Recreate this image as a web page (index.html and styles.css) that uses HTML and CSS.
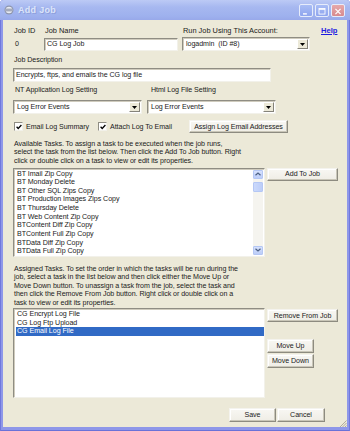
FILE: index.html
```html
<!DOCTYPE html>
<html lang="en">

<head>
    <meta charset="UTF-8">
    <meta name="viewport" content="width=device-width, initial-scale=1.0">
    <title>Add Job</title>
    <link rel="stylesheet" href="styles.css">
</head>

<body>
    <div class="window">
        <div class="titlebar">
            <svg class="app-icon" width="10" height="10" viewBox="0 0 10 10">
                <circle cx="5" cy="5" r="4.5" fill="#8e96ad" />
                <circle cx="5" cy="5" r="3.3" fill="#e8ebf2" />
                <path d="M2 4.2h6M2 5.8h6" stroke="#7d859c" stroke-width="0.9" />
            </svg>
            <span class="title">Add Job</span>
            <div class="controls">
                <span class="ctl">
                    <svg width="14" height="13" viewBox="0 0 14 13"><rect x="3.5" y="8.5" width="4.5" height="1.6" fill="#fff" /></svg>
                </span>
                <span class="ctl">
                    <svg width="14" height="13" viewBox="0 0 14 13"><rect x="3.5" y="3" width="7" height="6.5" fill="none" stroke="#fff" stroke-width="1" /><rect x="3.5" y="3" width="7" height="1.5" fill="#fff" /></svg>
                </span>
                <span class="ctl ctl-close">
                    <svg width="14" height="13" viewBox="0 0 14 13"><path d="M4 3.5l6 6M10 3.5l-6 6" stroke="#fff" stroke-width="1.4" /></svg>
                </span>
            </div>
        </div>

        <div class="client">
            <div class="row row-top">
                <span class="col-id">Job ID</span>
                <span class="col-name">Job Name</span>
                <span class="col-account">Run Job Using This Account:</span>
                <a class="help" href="#">Help</a>
            </div>

            <div class="row row-fields">
                <span class="job-id">0</span>
                <div class="field field-name">CG Log Job</div>
                <div class="combo combo-account">
                    <span class="combo-text">logadmin&nbsp; (ID #8)</span>
                    <span class="drop"><svg width="5" height="3" viewBox="0 0 5 3"><path d="M0 0h5L2.5 3z" fill="#000" /></svg></span>
                </div>
            </div>

            <div class="row label-row label-desc">Job Description</div>
            <div class="row row-desc">
                <div class="field field-desc">Encrypts, ftps, and emails the CG log file</div>
            </div>

            <div class="row label-row label-logs">
                <span class="col-nt">NT Application Log Setting</span>
                <span>Html Log File Setting</span>
            </div>
            <div class="row row-logs">
                <div class="combo combo-nt">
                    <span class="combo-text">Log Error Events</span>
                    <span class="drop"><svg width="5" height="3" viewBox="0 0 5 3"><path d="M0 0h5L2.5 3z" fill="#000" /></svg></span>
                </div>
                <div class="combo combo-html">
                    <span class="combo-text">Log Error Events</span>
                    <span class="drop"><svg width="5" height="3" viewBox="0 0 5 3"><path d="M0 0h5L2.5 3z" fill="#000" /></svg></span>
                </div>
            </div>

            <div class="row row-checks">
                <span class="check"><svg width="6" height="6" viewBox="0 0 6 6"><path d="M0.6 2.8l1.6 1.7L5.4 1" fill="none" stroke="#000" stroke-width="1.3" /></svg></span>
                <span class="check-label check-label-1">Email Log Summary</span>
                <span class="check"><svg width="6" height="6" viewBox="0 0 6 6"><path d="M0.6 2.8l1.6 1.7L5.4 1" fill="none" stroke="#000" stroke-width="1.3" /></svg></span>
                <span class="check-label check-label-2">Attach Log To Email</span>
                <button class="btn btn-assign">Assign Log Email Addresses</button>
            </div>

            <p class="note note-available">Available Tasks. To assign a task to be executed when the job runs,<br>select the task from the list below. Then click the Add To Job button. Right<br>click or double click on a task to view or edit its properties.</p>

            <div class="row row-list">
                <div class="list">
                    <div class="list-items">
                        <div class="item">BT Imail Zip Copy</div>
                        <div class="item">BT Monday Delete</div>
                        <div class="item">BT Other SQL Zips Copy</div>
                        <div class="item">BT Production Images Zips Copy</div>
                        <div class="item">BT Thursday Delete</div>
                        <div class="item">BT Web Content Zip Copy</div>
                        <div class="item">BTContent Diff Zip Copy</div>
                        <div class="item">BTContent Full Zip Copy</div>
                        <div class="item">BTData Diff Zip Copy</div>
                        <div class="item">BTData Full Zip Copy</div>
                    </div>
                    <div class="scrollbar">
                        <span class="sb-btn"><svg width="6" height="4" viewBox="0 0 6 4"><path d="M0.5 3.3L3 1l2.5 2.3" fill="none" stroke="#4d6185" stroke-width="1.2" /></svg></span>
                        <span class="sb-thumb"></span>
                        <span class="sb-track"></span>
                        <span class="sb-btn"><svg width="6" height="4" viewBox="0 0 6 4"><path d="M0.5 0.7L3 3l2.5-2.3" fill="none" stroke="#4d6185" stroke-width="1.2" /></svg></span>
                    </div>
                </div>
                <div class="side">
                    <button class="btn btn-wide">Add To Job</button>
                </div>
            </div>

            <p class="note note-assigned">Assigned Tasks. To set the order in which the tasks will be run during the<br>job, select a task in the list below and then click either the Move Up or<br>Move Down button. To unassign a task from the job, select the task and<br>then click the Remove From Job button. Right click or double click on a<br>task to view or edit its properties.</p>

            <div class="row row-list row-assigned">
                <div class="list list-assigned">
                    <div class="list-items">
                        <div class="item">CG Encrypt Log File</div>
                        <div class="item">CG Log Ftp Upload</div>
                        <div class="item selected">CG Email Log File</div>
                    </div>
                </div>
                <div class="side">
                    <button class="btn btn-wide btn-remove">Remove From Job</button>
                    <button class="btn btn-move btn-up">Move Up</button>
                    <button class="btn btn-move btn-down">Move Down</button>
                </div>
            </div>

            <div class="row row-footer">
                <button class="btn btn-save">Save</button>
                <button class="btn btn-cancel">Cancel</button>
                <svg class="grip" width="9" height="7" viewBox="0 0 9 7">
                    <path d="M8.5 0.5L2 7M8.5 3L4.5 7M8.5 5.5L7 7" stroke="#a8a496" stroke-width="0.9" />
                </svg>
            </div>
        </div>
    </div>
</body>

</html>
```

FILE: styles.css
```css
* {
    box-sizing: border-box;
}

body {
    margin: 0;
    font-family: "Liberation Sans", Arial, sans-serif;
    font-size: 7.1px;
    letter-spacing: -0.05px;
    color: #1a1a1a;
    background: #fff;
}

.window {
    width: 350px;
    height: 431px;
    display: flex;
    flex-direction: column;
    background: #8e97e9;
    border-radius: 4px 4px 0 0;
    box-shadow: inset 1px 0 #7078dc, inset -1px 0 #7078dc, inset 0 -1px #6a72d8;
    overflow: hidden;
}

/* title bar (inactive XP look) */
.titlebar {
    height: 20px;
    flex-shrink: 0;
    display: flex;
    align-items: center;
    padding: 0 5px 0 4px;
    background: linear-gradient(#bccaf5, #a7b8f0 35%, #9eb1ee 80%, #98a9ea);
}

.app-icon {
    margin-right: 4px;
}

.title {
    font-size: 9px;
    font-weight: bold;
    color: #dce5fa;
    letter-spacing: 0.3px;
    text-shadow: 1px 1px 0 #8e9fdc;
}

.controls {
    margin-left: auto;
    display: flex;
    gap: 2px;
}

.ctl {
    width: 14px;
    height: 13px;
    border: 1px solid #e6ecfb;
    border-radius: 2px;
    background: linear-gradient(#a9bdf5, #8fa5ee);
    display: flex;
}

.ctl-close {
    background: linear-gradient(#e6a9ab, #d78a8e);
}

/* dialog body */
.client {
    flex: 1;
    margin: 0 3px 4px;
    padding-left: 10px;
    background: #ece9d8;
    display: flex;
    flex-direction: column;
}

.row {
    display: flex;
    align-items: center;
    white-space: nowrap;
}

.row-top {
    margin-top: 6px;
    height: 9px;
    line-height: 9px;
    font-size: 7.4px;
    letter-spacing: 0;
}

.col-id {
    width: 32px;
    padding-left: 1px;
}

.col-name {
    width: 138px;
}

.col-account {
    width: 138px;
}

.help {
    color: #1c1ce0;
    font-weight: bold;
    font-size: 7.6px;
}

.row-fields {
    margin-top: 2px;
    height: 14px;
}

.job-id {
    width: 31px;
    padding-left: 2px;
}

.field {
    height: 13px;
    line-height: 11px;
    padding: 0 2px;
    background: #fff;
    border: 1px solid;
    border-color: #8f8d83 #f2f1ea #f2f1ea #8f8d83;
    box-shadow: inset 1px 1px #cfcbbd;
    white-space: nowrap;
}

.field-name {
    width: 134px;
    margin-right: 4px;
}

.combo {
    height: 14px;
    display: flex;
    align-items: center;
    background: #fff;
    border: 1px solid;
    border-color: #8f8d83 #f2f1ea #f2f1ea #8f8d83;
    box-shadow: inset 1px 1px #cfcbbd;
    padding: 1px;
}

.combo-text {
    flex: 1;
    padding-left: 2px;
}

.drop {
    width: 11px;
    height: 10px;
    display: flex;
    align-items: center;
    justify-content: center;
    background: #ece9d8;
    border: 1px solid;
    border-color: #fff #85837a #85837a #fff;
}

.combo-account {
    width: 128px;
}

.label-row {
    height: 9px;
    line-height: 9px;
    padding-left: 1px;
}

.label-desc {
    margin-top: 5px;
}

.row-desc {
    margin-top: 3px;
}

.field-desc {
    width: 258px;
    height: 14px;
    line-height: 12px;
}

.label-logs {
    margin-top: 4px;
    padding-left: 2px;
}

.col-nt {
    width: 136px;
}

.row-logs {
    margin-top: 5px;
}

.combo-nt {
    width: 129px;
    margin-right: 5px;
}

.combo-html {
    width: 129px;
}

.row-checks {
    margin-top: 6px;
    height: 13px;
}

.check {
    width: 9px;
    height: 9px;
    margin-left: 1px;
    background: #fff;
    border: 1px solid;
    border-color: #8f8d83 #f2f1ea #f2f1ea #8f8d83;
    display: flex;
    align-items: center;
    justify-content: center;
}

.check-label {
    margin-left: 3px;
}

.check-label-1 {
    width: 71px;
}

.check-label-2 {
    width: 79px;
}

.btn {
    height: 13px;
    padding: 0;
    font-family: inherit;
    font-size: 7.1px;
    letter-spacing: -0.05px;
    color: #1a1a1a;
    background: linear-gradient(#f8f7f3, #efede5);
    border: 1px solid;
    border-color: #f4f3ee #8d8b80 #8d8b80 #f4f3ee;
    box-shadow: inset -1px -1px #c9c6b8, inset 1px 1px #fff;
    white-space: nowrap;
}

.btn-assign {
    width: 99px;
}

.note {
    margin: 6.5px 0 0;
    padding-left: 1px;
    line-height: 8.5px;
    white-space: nowrap;
}

.row-list {
    margin-top: 2.5px;
    align-items: flex-start;
}

.list {
    width: 252px;
    height: 89px;
    display: flex;
    background: #fff;
    border: 1px solid;
    border-color: #8f8d83 #f2f1ea #f2f1ea #8f8d83;
    box-shadow: inset 1px 1px #cfcbbd;
    padding: 1px 1px 1px 2px;
}

.list-items {
    flex: 1;
}

.item {
    height: 8.67px;
    line-height: 8.67px;
    padding-left: 1px;
    white-space: nowrap;
}

.item.selected {
    background: #316ac5;
    color: #fff;
}

.scrollbar {
    width: 10px;
    display: flex;
    flex-direction: column;
    background: #f5f4ef;
}

.sb-btn {
    height: 9px;
    display: flex;
    align-items: center;
    justify-content: center;
    background: linear-gradient(#d6e1fc, #bccdf8);
    border: 1px solid #b4c7f5;
    border-radius: 1px;
}

.sb-thumb {
    height: 10px;
    margin-top: 3px;
    background: linear-gradient(90deg, #cbd9fb, #bccdf8);
    border: 1px solid #b4c7f5;
    border-radius: 1px;
}

.sb-track {
    flex: 1;
}

.side {
    margin-left: 2px;
    display: flex;
    flex-direction: column;
    align-items: flex-start;
}

.btn-wide {
    width: 71px;
}

.note-assigned {
    margin-top: 8px;
}

.row-assigned {
    margin-top: 1px;
}

.list-assigned {
    height: 90px;
    padding-right: 0;
}

.btn-remove {
    margin-top: 1px;
}

.btn-move {
    width: 47px;
    height: 14px;
}

.btn-up {
    margin-top: 17px;
}

.btn-down {
    margin-top: 1px;
}

.row-footer {
    margin-top: 10px;
    align-items: flex-start;
}

.btn-save {
    width: 47px;
    height: 14px;
    margin-left: 216px;
}

.btn-cancel {
    width: 48px;
    height: 14px;
    margin-left: 1px;
}

.grip {
    margin-left: 13px;
    margin-top: 12px;
}
```
